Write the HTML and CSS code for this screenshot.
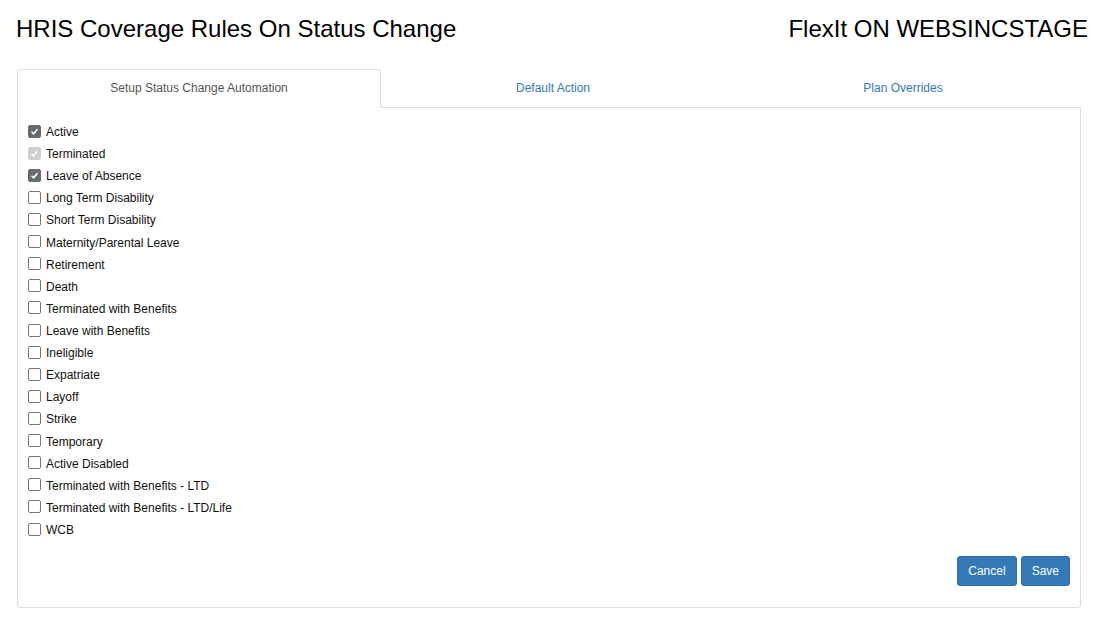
FILE: index.html
```html
<!DOCTYPE html>
<html>
<head>
<meta charset="utf-8">
<link rel="stylesheet" href="styles.css">
</head>
<body>
<div class="page">
  <header class="top">
    <h1 class="title">HRIS Coverage Rules On Status Change</h1>
    <h1 class="title">FlexIt ON WEBSINCSTAGE</h1>
  </header>
  <div class="tabs-wrap">
    <nav class="tabs">
      <div class="tab active t1">Setup Status Change Automation</div>
      <div class="tab t2">Default Action</div>
      <div class="tab t3">Plan Overrides</div>
    </nav>
    <section class="panel">
      <ul class="list">
        <li><span class="cb on"><svg viewBox="0 0 13 13"><path d="M3 6.8 L5.4 9.2 L10 3.8" fill="none" stroke="#fff" stroke-width="1.8"/></svg></span>Active</li>
        <li><span class="cb dis"><svg viewBox="0 0 13 13"><path d="M3 6.8 L5.4 9.2 L10 3.8" fill="none" stroke="#fff" stroke-width="1.8"/></svg></span>Terminated</li>
        <li><span class="cb on"><svg viewBox="0 0 13 13"><path d="M3 6.8 L5.4 9.2 L10 3.8" fill="none" stroke="#fff" stroke-width="1.8"/></svg></span>Leave of Absence</li>
        <li><span class="cb"></span>Long Term Disability</li>
        <li><span class="cb"></span>Short Term Disability</li>
        <li><span class="cb"></span>Maternity/Parental Leave</li>
        <li><span class="cb"></span>Retirement</li>
        <li><span class="cb"></span>Death</li>
        <li><span class="cb"></span>Terminated with Benefits</li>
        <li><span class="cb"></span>Leave with Benefits</li>
        <li><span class="cb"></span>Ineligible</li>
        <li><span class="cb"></span>Expatriate</li>
        <li><span class="cb"></span>Layoff</li>
        <li><span class="cb"></span>Strike</li>
        <li><span class="cb"></span>Temporary</li>
        <li><span class="cb"></span>Active Disabled</li>
        <li><span class="cb"></span>Terminated with Benefits - LTD</li>
        <li><span class="cb"></span>Terminated with Benefits - LTD/Life</li>
        <li><span class="cb"></span>WCB</li>
      </ul>
      <div class="actions">
        <button class="btn">Cancel</button>
        <button class="btn">Save</button>
      </div>
    </section>
  </div>
</div>
</body>
</html>
```

FILE: styles.css
```css
* { box-sizing: border-box; }
html, body { margin: 0; padding: 0; background: #fff; }
body {
  font-family: "Liberation Sans", Arial, sans-serif;
  color: #222;
  font-size: 12px;
}
.page { padding: 0 24px 0 16px; }
.top {
  display: flex;
  justify-content: space-between;
  align-items: center;
  height: 56px;
  padding-top: 1px;
}
.title {
  margin: 0;
  font-size: 24px;
  font-weight: normal;
  color: #000;
  line-height: 28px;
}
.tabs-wrap {
  margin: 13px 7px 0 1px;
}
.tabs {
  display: flex;
  border-bottom: 1px solid #ddd;
}
.tab {
  text-align: center;
  padding: 10px 0;
  line-height: 17px;
  font-size: 12px;
  color: #337ab7;
  margin-bottom: -1px;
  border: 1px solid transparent;
}
.t1 { width: 364px; }
.t2 { width: 344px; }
.t3 { flex: 1; }
.tab.active {
  color: #555;
  border-color: #ddd;
  border-bottom-color: #fff;
  border-radius: 4px 4px 0 0;
  background: #fff;
}
.panel {
  border: 1px solid #ddd;
  border-top: none;
  border-radius: 0 0 4px 4px;
  padding: 13px 10px 21px 10px;
}
.list {
  list-style: none;
  margin: 0;
  padding: 0;
}
.list li {
  display: flex;
  align-items: center;
  height: 22.11px;
  color: #111;
}
.cb {
  width: 13px;
  height: 13px;
  border: 1px solid #767676;
  border-radius: 2px;
  margin: -2px 5px 0 0;
  background: #fff;
  display: inline-flex;
  flex: none;
}
.cb svg { width: 11px; height: 11px; }
.cb.on { background: #6b6b6b; border-color: #6b6b6b; }
.cb.dis { background: #cfcfcf; border-color: #cfcfcf; }
.actions {
  display: flex;
  justify-content: flex-end;
  gap: 4px;
  margin-top: 15px;
}
.btn {
  font-family: "Liberation Sans", Arial, sans-serif;
  font-size: 12px;
  color: #fff;
  background: #337ab7;
  border: 1px solid #2e6da4;
  border-radius: 3px;
  height: 30px;
  padding: 0 10px;
  cursor: pointer;
}
```
